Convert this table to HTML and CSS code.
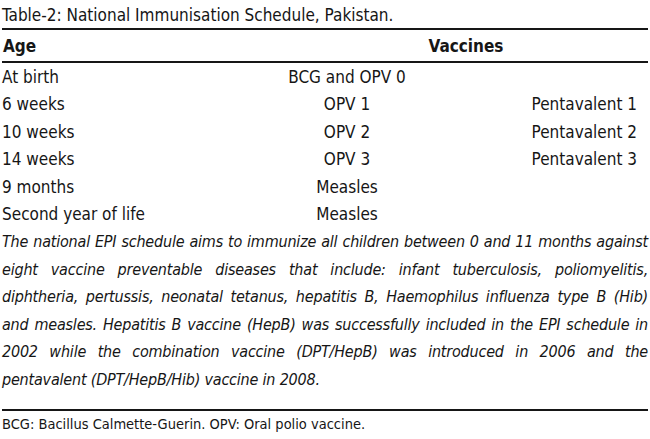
FILE: index.html
```html
<!DOCTYPE html>
<html lang="en">
<head>
<meta charset="utf-8">
<title>Table-2: National Immunisation Schedule, Pakistan.</title>
<link rel="stylesheet" href="styles.css">
</head>
<body>
<div class="sheet">
  <div class="caption">Table-2: National Immunisation Schedule, Pakistan.</div>
  <div class="head">
    <div class="c-age">Age</div>
    <div class="c-vacc">Vaccines</div>
  </div>
  <div class="rows">
    <div class="row"><div class="c-age">At birth</div><div class="c-mid">BCG and OPV 0</div><div class="c-right"></div></div>
    <div class="row"><div class="c-age">6 weeks</div><div class="c-mid">OPV 1</div><div class="c-right">Pentavalent 1</div></div>
    <div class="row"><div class="c-age">10 weeks</div><div class="c-mid">OPV 2</div><div class="c-right">Pentavalent 2</div></div>
    <div class="row"><div class="c-age">14 weeks</div><div class="c-mid">OPV 3</div><div class="c-right">Pentavalent 3</div></div>
    <div class="row"><div class="c-age">9 months</div><div class="c-mid">Measles</div><div class="c-right"></div></div>
    <div class="row"><div class="c-age">Second year of life</div><div class="c-mid">Measles</div><div class="c-right"></div></div>
  </div>
  <p class="note">
    <span class="ln">The national EPI schedule aims to immunize all children between 0 and 11 months against</span>
    <span class="ln">eight vaccine preventable diseases that include: infant tuberculosis, poliomyelitis,</span>
    <span class="ln">diphtheria, pertussis, neonatal tetanus, hepatitis B, Haemophilus influenza type B (Hib)</span>
    <span class="ln">and measles. Hepatitis B vaccine (HepB) was successfully included in the EPI schedule in</span>
    <span class="ln">2002 while the combination vaccine (DPT/HepB) was introduced in 2006 and the</span>
    <span class="ln last">pentavalent (DPT/HepB/Hib) vaccine in 2008.</span>
  </p>
  <div class="foot">BCG: Bacillus Calmette-Guerin. OPV: Oral polio vaccine.</div>
</div>
</body>
</html>
```

FILE: styles.css
```css
html, body {
  margin: 0;
  padding: 0;
  background: #ffffff;
}

body {
  font-family: "Liberation Sans Narrow", "DejaVu Sans Condensed", "Liberation Sans", sans-serif;
  font-stretch: condensed;
  color: #161616;
}

.sheet {
  width: 646px;
  padding: 0 0 0 2px;
}

.caption {
  font-size: 17px;
  line-height: 26px;
  padding-top: 2px;
  border-bottom: 2px solid #161616;
}

.head {
  display: grid;
  grid-template-columns: 282px 1fr;
  height: 31px;
  align-items: center;
  font-size: 17px;
  font-weight: bold;
  border-bottom: 2px solid #161616;
}

.head .c-age {
  padding-left: 1px;
}

.head .c-vacc {
  text-align: center;
}

.rows {
  display: flex;
  flex-direction: column;
}

.row {
  display: grid;
  grid-template-columns: 282px 126px 1fr;
  height: 27.5px;
  align-items: center;
  font-size: 17px;
}

.c-mid {
  text-align: center;
  white-space: nowrap;
}

.c-right {
  text-align: right;
  padding-right: 11px;
}

.note {
  margin: 0;
  font-size: 16px;
  font-style: italic;
  line-height: 27.5px;
  letter-spacing: -0.2px;
}

.ln {
  display: block;
  text-align: justify;
  text-align-last: justify;
  white-space: nowrap;
}

.ln.last {
  text-align-last: left;
}

.foot {
  margin-top: 16px;
  border-top: 2px solid #161616;
  font-size: 14.5px;
  line-height: 26px;
}
```
